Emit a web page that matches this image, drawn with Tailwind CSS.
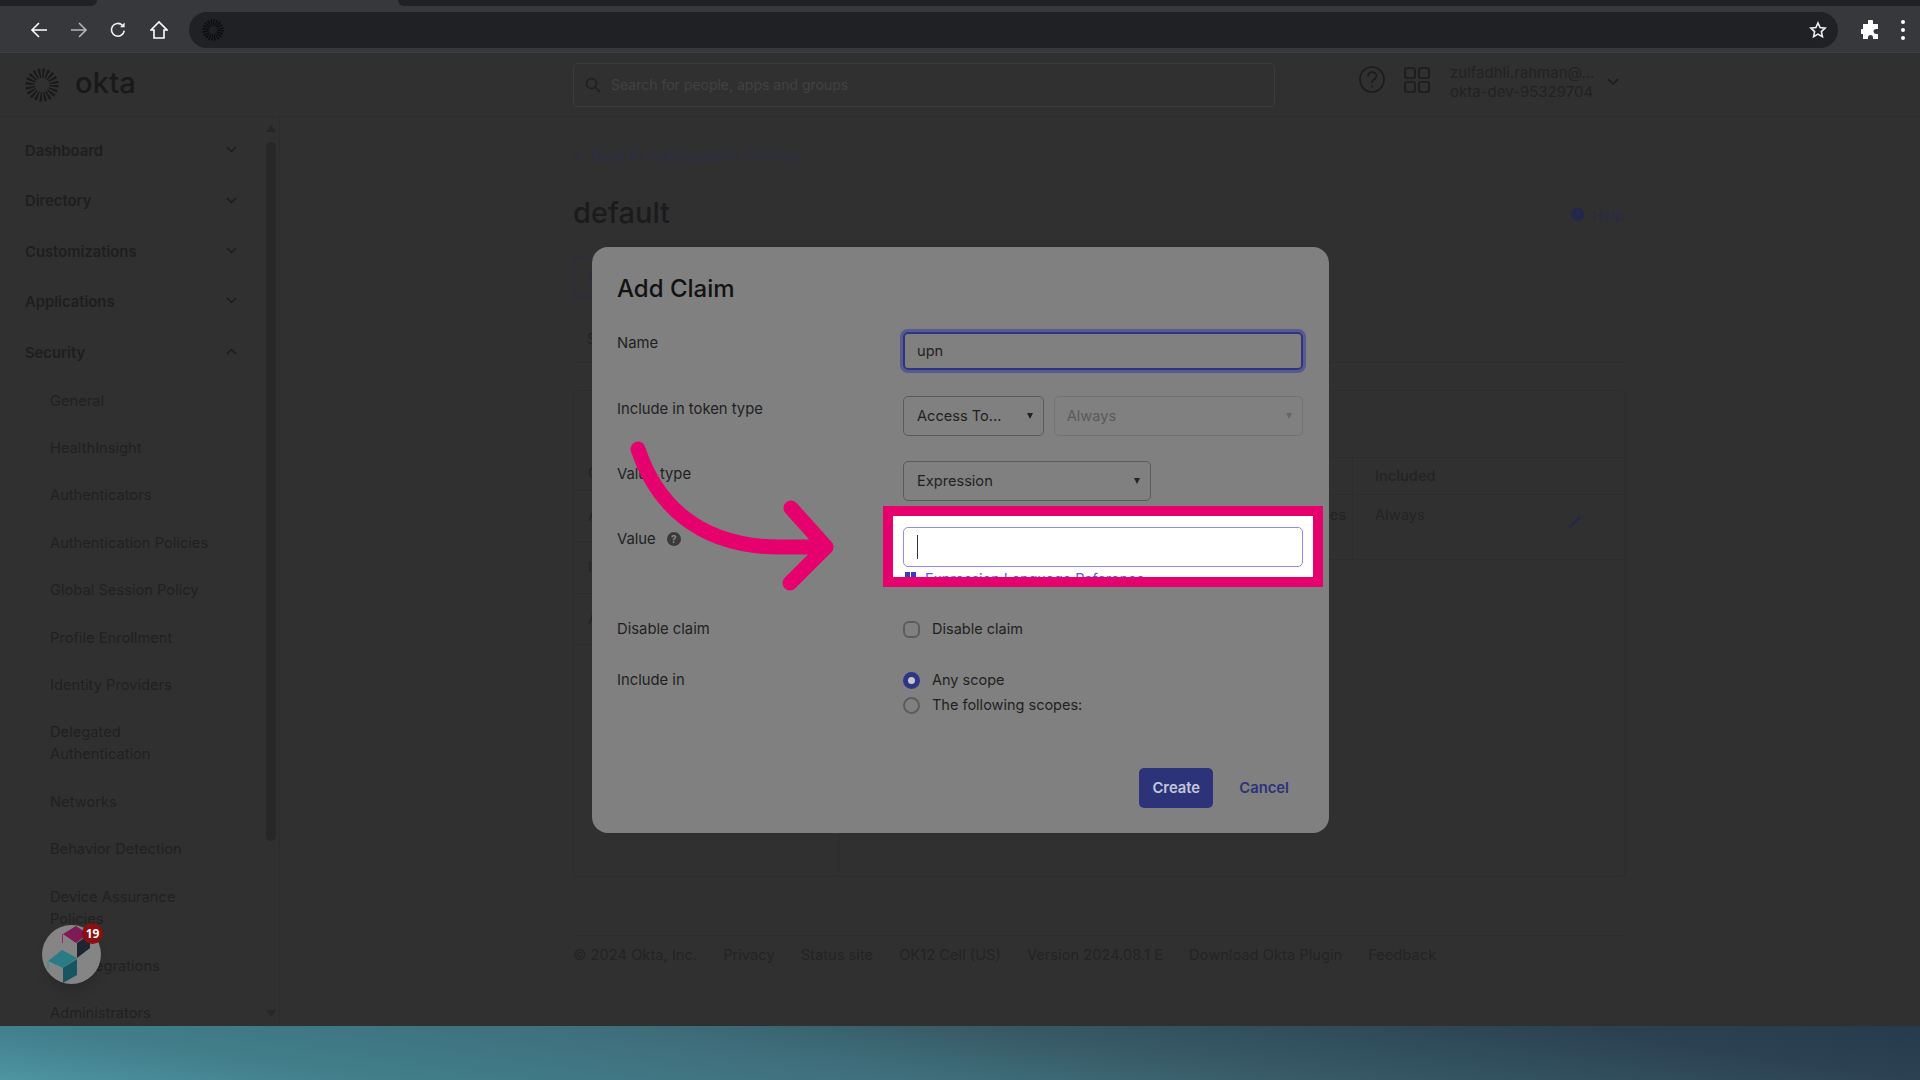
<!DOCTYPE html>
<html lang="en">
<head>
  <meta charset="UTF-8">
  <title>Add Claim</title>
  <script src="https://cdn.jsdelivr.net/npm/@tailwindcss/browser@4"></script>
</head>
<body class="w-[1920px] h-[1080px] overflow-hidden bg-[#303030] font-['Inter',sans-serif] relative">
  <!-- Browser chrome -->
  <div class="h-[53px] bg-[#36383c] border-b border-[#3d4045] flex flex-col">
    <div class="h-[6px] flex">
      <div class="w-[97px] bg-[#202124] rounded-br-lg"></div>
      <div class="w-[301px]"></div>
      <div class="flex-1 bg-[#202124] rounded-bl-lg"></div>
    </div>
    <div class="flex items-center h-[47px] pl-[30px] pt-[3px]">
      <svg class="w-[18px] h-[18px]" viewBox="0 0 18 18" fill="none" stroke="#fff" stroke-width="1.6"><path d="M17 9H2M9 2 2 9l7 7"/></svg>
      <svg class="w-[18px] h-[18px] ml-[22px]" viewBox="0 0 18 18" fill="none" stroke="#b4b6b9" stroke-width="1.6"><path d="M1 9h15M9 2l7 7-7 7"/></svg>
      <svg class="w-[18px] h-[18px] ml-[21px]" viewBox="0 0 18 18" fill="none" stroke="#f1f1f1" stroke-width="1.6"><path d="M15.2 9.6A6.4 6.4 0 1 1 13.4 4.3"/><path d="M15.6 1.6v4.6H11z" fill="#f1f1f1" stroke="none"/></svg>
      <svg class="w-[18px] h-[20px] ml-[23px]" viewBox="0 0 18 20" fill="none" stroke="#fff" stroke-width="1.6"><path d="M1 10 9 2l8 8h-3v8H4v-8z"/></svg>
      <div class="w-[1649px] h-[36px] ml-[21px] bg-[#202124] rounded-full flex items-center pl-[13px] pr-[11px] justify-between">
        <svg class="w-[22px] h-[22px]" viewBox="0 0 36 36" fill="none"><circle cx="18" cy="18" r="12" stroke="#0c0c0c" stroke-width="11" stroke-dasharray="2 1.77"/></svg>
        <svg class="w-[18px] h-[18px]" viewBox="0 0 18 18" fill="none" stroke="#f1f1f1" stroke-width="1.6"><path d="m9 2 2.1 4.600 5 .6-3.700 3.400 1 5L9 13.100l-4.400 2.500 1-5L1.900 7.200l5-.6z"/></svg>
      </div>
      <svg class="w-[20px] h-[20px] ml-[23px]" viewBox="0 0 20 20" fill="#fff"><path d="M7 1.500a2.500 2.500 0 0 1 5 0V4h5v5h-2a2.500 2.500 0 0 0 0 5h2v5h-5v-1.500a2.500 2.500 0 0 0-5 0V19H2v-5h-.5a2.500 2.500 0 0 1 0-5H2V4h5z"/></svg>
      <div class="ml-[20px] flex flex-col gap-[4px]">
        <div class="w-[4px] h-[4px] rounded-full bg-white"></div>
        <div class="w-[4px] h-[4px] rounded-full bg-white"></div>
        <div class="w-[4px] h-[4px] rounded-full bg-white"></div>
      </div>
    </div>
  </div>

  <!-- Okta header -->
  <div class="h-[64px] border-b border-[#2c2c2c] flex items-center relative">
    <div class="w-[573px] flex items-center pl-[25px]">
      <svg class="w-[34px] h-[34px]" viewBox="0 0 36 36" fill="none"><circle cx="18" cy="18" r="12.500" stroke="#191919" stroke-width="10" stroke-dasharray="2 1.930"/></svg>
      <span class="ml-[16px] text-[29px] leading-none font-medium text-[#191919] tracking-[0.2px] pb-[4px]">okta</span>
    </div>
    <div class="w-[702px] h-[44px] border border-[#3b3b3b] rounded flex items-center pl-[11px]">
      <svg class="w-[16px] h-[16px]" viewBox="0 0 16 16" fill="none" stroke="#1f1f1f" stroke-width="1.500"><circle cx="6.500" cy="6.500" r="5"/><path d="m10.500 10.500 4.500 4.500"/></svg>
      <span class="ml-[10px] text-[14px] text-[#424242]">Search for people, apps and groups</span>
    </div>
    <svg class="w-[26px] h-[27px] ml-[84px] -mt-[10px]" viewBox="0 0 26 27" fill="none" stroke="#1b1b1b" stroke-width="1.600"><ellipse cx="13" cy="13.500" rx="12" ry="12.500"/><path d="M9 10.500c0-6 8.500-5.500 8.500-.5 0 3.500-4.500 3-4.500 7"/><path d="M13 19.500v2"/></svg>
    <svg class="w-[26px] h-[26px] ml-[19px] -mt-[10px]" viewBox="0 0 26 26" fill="none" stroke="#1b1b1b" stroke-width="1.700"><rect x="1" y="1" width="10" height="10" rx="2"/><rect x="15" y="1" width="10" height="10" rx="2"/><rect x="1" y="15" width="10" height="10" rx="2"/><rect x="15" y="15" width="10" height="10" rx="2"/></svg>
    <div class="ml-[20px] text-[15px] leading-[19px] text-[#222] -mt-[5px]">
      <div>zulfadhli.rahman@...</div>
      <div>okta-dev-95329704</div>
    </div>
    <svg class="w-[12px] h-[8px] ml-[13px] -mt-[5px]" viewBox="0 0 12 8" fill="none" stroke="#1b1b1b" stroke-width="1.500"><path d="m1 1 5 5 5-5"/></svg>
  </div>

  <div class="flex h-[909px]">
    <!-- Sidebar -->
    <div class="w-[280px] shrink-0 border-r border-[#2c2c2c] relative overflow-hidden pt-[9px] pl-[25px] text-[14.800px] text-[#1e1e1e]">
      <div class="h-[50.400px] w-[212px] flex items-center justify-between font-semibold"><span>Dashboard</span><svg class="w-[11px] h-[7px] -mt-[3px]" viewBox="0 0 11 7" fill="none" stroke="#1b1b1b" stroke-width="1.400"><path d="m1 1 4.500 4.500L10 1"/></svg></div>
      <div class="h-[50.400px] w-[212px] flex items-center justify-between font-semibold"><span>Directory</span><svg class="w-[11px] h-[7px] -mt-[3px]" viewBox="0 0 11 7" fill="none" stroke="#1b1b1b" stroke-width="1.400"><path d="m1 1 4.500 4.500L10 1"/></svg></div>
      <div class="h-[50.400px] w-[212px] flex items-center justify-between font-semibold"><span>Customizations</span><svg class="w-[11px] h-[7px] -mt-[3px]" viewBox="0 0 11 7" fill="none" stroke="#1b1b1b" stroke-width="1.400"><path d="m1 1 4.500 4.500L10 1"/></svg></div>
      <div class="h-[50.400px] w-[212px] flex items-center justify-between font-semibold"><span>Applications</span><svg class="w-[11px] h-[7px] -mt-[3px]" viewBox="0 0 11 7" fill="none" stroke="#1b1b1b" stroke-width="1.400"><path d="m1 1 4.500 4.500L10 1"/></svg></div>
      <div class="h-[50.400px] w-[212px] flex items-center justify-between font-semibold"><span>Security</span><svg class="w-[11px] h-[7px] -mt-[3px]" viewBox="0 0 11 7" fill="none" stroke="#1b1b1b" stroke-width="1.400"><path d="m1 6 4.500-4.500L10 6"/></svg></div>
      <div class="-mt-[1px] pl-[25px] leading-[22px] text-[14.700px] text-[#202020]">
        <div class="h-[47.400px] flex items-center">General</div>
        <div class="h-[47.400px] flex items-center">HealthInsight</div>
        <div class="h-[47.400px] flex items-center">Authenticators</div>
        <div class="h-[47.400px] flex items-center">Authentication Policies</div>
        <div class="h-[47.400px] flex items-center">Global Session Policy</div>
        <div class="h-[47.400px] flex items-center">Profile Enrollment</div>
        <div class="h-[47.400px] flex items-center">Identity Providers</div>
        <div class="h-[69.400px] flex items-center">Delegated<br>Authentication</div>
        <div class="h-[47.400px] flex items-center">Networks</div>
        <div class="h-[47.400px] flex items-center">Behavior Detection</div>
        <div class="h-[69.400px] flex items-center">Device Assurance<br>Policies</div>
        <div class="h-[47.400px] flex items-center">API Integrations</div>
        <div class="h-[47.400px] flex items-center">Administrators</div>
      </div>
      <!-- Scrollbar -->
      <div class="absolute left-[266px] top-[8px] w-0 h-0 border-x-[5px] border-x-transparent border-b-[7px] border-b-[#272727]"></div>
      <div class="absolute left-[266px] top-[25px] w-[10px] h-[699px] rounded-full bg-[#272727]"></div>
      <div class="absolute left-[266px] top-[893px] w-0 h-0 border-x-[5px] border-x-transparent border-t-[7px] border-t-[#272727]"></div>
    </div>

    <!-- Main content -->
    <div class="pl-[293px] w-[1346px] shrink-0 text-[14.700px] text-[#232323]">
      <div class="h-[50px] flex items-end">
        <div class="flex items-center h-[22px] text-[#2c2c46]">
          <svg class="w-[12px] h-[12px] mr-[6px]" viewBox="0 0 12 12" fill="none" stroke="#2c2c46" stroke-width="1.300"><path d="M11 6H1.500M6 1.500 1.500 6 6 10.500"/></svg>
          <span>Back to Authorization Servers</span>
        </div>
      </div>
      <div class="h-[40px] mt-[26px] flex items-center justify-between">
        <span class="text-[29px] font-medium text-[#1b1b1b]">default</span>
        <span class="flex items-center text-[#2a2a42] mr-[2px] mt-[6px]"><span class="w-[13px] h-[13px] rounded-full bg-[#23264e] text-[9px] leading-[13px] text-center text-[#303030] font-bold -mt-[3px]">?</span><span class="ml-[8px]">Help</span></span>
      </div>
      <div class="w-[60px] h-[40px] mt-[24px] border border-[#2a2b46] rounded flex items-center pl-[14px] text-[#2a2b46]">A</div>
      <div class="h-[66px] border-b border-[#2c2c2c] flex items-center pl-[14px] pt-[20px]">S</div>
      <!-- Claims panel -->
      <div class="w-[1053px] h-[487px] mt-[27px] border border-[#2c2c2c] rounded flex">
        <div class="w-[265px] border-r border-[#2c2c2c] pt-[66px]">
          <div class="h-[33px] flex items-center pl-[14px]">C</div>
          <div class="h-[51px] border-t border-[#2c2c2c] flex items-center pl-[14px]">A</div>
          <div class="h-[52px] border-t border-[#2c2c2c] flex items-center pl-[14px]">ID</div>
          <div class="h-[52px] border-y border-[#2c2c2c] flex items-center pl-[14px]">A</div>
        </div>
        <div class="flex-1 pt-[66px]">
          <div class="h-[38px] border-y border-[#2c2c2c] flex items-center font-medium">
            <div class="w-[492px] text-right pr-[1px]">e</div>
            <div class="w-[22px] self-stretch border-r border-[#2c2c2c]"></div>
            <div class="pl-[22px]">Included</div>
          </div>
          <div class="h-[65px] border-b border-[#2c2c2c] flex">
            <div class="w-[507px] text-right pt-[9px]">es</div>
            <div class="w-[7px] self-stretch border-r border-[#2c2c2c]"></div>
            <div class="pl-[22px] pt-[9px] w-[216px]">Always</div>
            <svg class="w-[12px] h-[12px] mt-[21px]" viewBox="0 0 12 12" fill="none" stroke="#23264e" stroke-width="2"><path d="M1 11 11 1"/></svg>
          </div>
        </div>
      </div>
      <!-- Footer -->
      <div class="w-[1053px] h-[39px] mt-[58px] border-t border-[#2c2c2c] flex items-center gap-[26px] text-[#232323]">
        <span>© 2024 Okta, Inc.</span><span>Privacy</span><span>Status site</span><span>OK12 Cell (US)</span><span>Version 2024.08.1 E</span><span>Download Okta Plugin</span><span>Feedback</span>
      </div>
    </div>
  </div>

  <!-- Bottom gradient strip -->
  <div class="absolute left-0 top-[1026px] w-[1920px] h-[54px] bg-[linear-gradient(8.400deg,#4e94a2_0%,#417f8b_16%,#3f6e7b_42%,#375a66_58%,#2c4253_84%,#263c4e_100%)]"></div>

  <!-- Floating widget -->
  <div class="absolute left-[42px] top-[925px] w-[59px] h-[59px] rounded-full bg-[#858585] shadow-lg"></div>
  <svg class="absolute left-0 top-[920px] w-[110px] h-[70px]" viewBox="0 920 110 70">
    <path d="M63 934l13-8 12 8-12 9z" fill="#7f1a55"/>
    <path d="M62.500 934v9" stroke="#a0226a" fill="none"/>
    <path d="M77 943l13-9v14l-13 10z" fill="#1c2530"/>
    <path d="M48 961l14-11 15 8-14 10z" fill="#2a7c84"/>
    <path d="M63 968l14-9v16l-14 8z" fill="#185560"/>
    <path d="M48 961v8" stroke="#2f8f98" fill="none"/>
  </svg>
  <div class="absolute left-[82px] top-[923px] w-[21px] h-[21px] rounded-full bg-[#8a1010] text-white text-[12px] leading-[21px] text-center font-bold font-['Open_Sans',sans-serif]">19</div>

  <!-- Modal -->
  <div class="absolute left-[592px] top-[247px] w-[737px] h-[586px] bg-[#808080] rounded-2xl px-[25px] pt-[26px] text-[14.600px] leading-[20px] text-[#1f1f1f]">
    <div class="h-[32px] flex items-center text-[24px] font-medium text-[#121212]">Add Claim</div>
    <div class="grid grid-cols-[286px_400px] mt-[27px]">
      <div class="pt-px text-[14.800px]">Name</div>
      <div class="h-[38px] border-2 border-[#30347e] rounded-[5px] ring-[3px] ring-[#555a90] flex items-center pl-[12px]">upn</div>
    </div>
    <div class="grid grid-cols-[286px_400px] mt-[26px]">
      <div class="pt-[3px] text-[14.800px]">Include in token type</div>
      <div class="flex gap-[10px]">
        <div class="w-[141px] h-[40px] border border-[#5a5a5a] rounded-[5px] flex items-center justify-between pl-[13px] pr-[10px]"><span>Access To...</span><span class="w-0 h-0 border-x-[3.500px] border-x-transparent border-t-[6px] border-t-[#222]"></span></div>
        <div class="w-[250px] h-[40px] border border-[#737373] rounded-[5px] flex items-center justify-between pl-[12px] pr-[10px] text-[#5a5a5a]"><span>Always</span><span class="w-0 h-0 border-x-[3.500px] border-x-transparent border-t-[6px] border-t-[#666]"></span></div>
      </div>
    </div>
    <div class="grid grid-cols-[286px_400px] mt-[25px]">
      <div class="pt-[3px] text-[14.800px]">Value type</div>
      <div class="w-[248px] h-[40px] border border-[#5a5a5a] rounded-[5px] flex items-center justify-between pl-[13px] pr-[10px]"><span>Expression</span><span class="w-0 h-0 border-x-[3.500px] border-x-transparent border-t-[6px] border-t-[#222]"></span></div>
    </div>
    <div class="grid grid-cols-[286px_400px] mt-[25px]">
      <div class="pt-[3px] flex items-start text-[14.800px]">Value <span class="ml-[11px] mt-[3px] w-[14px] h-[14px] rounded-full bg-[#3a3a3a] text-[10px] leading-[14px] text-center text-[#888] font-bold">?</span></div>
      <div>
        <div class="h-[40px]"></div>
        <div class="mt-[2px] pl-[22px] text-[14.400px] text-[#555]">Expression Language Reference</div>
      </div>
    </div>
    <div class="grid grid-cols-[286px_400px] mt-[31px]">
      <div class="text-[14.800px]">Disable claim</div>
      <div class="flex items-center gap-[12px]"><span class="w-[17px] h-[17px] rounded-[6px] border-2 border-[#5c5c5c]"></span><span class="text-[14.500px]">Disable claim</span></div>
    </div>
    <div class="grid grid-cols-[286px_400px] mt-[31px]">
      <div class="text-[14.800px]">Include in</div>
      <div class="flex flex-col gap-[5px] text-[14.500px]">
        <div class="flex items-center gap-[12px]"><span class="w-[17px] h-[17px] rounded-full border-[5px] border-[#2f3585] bg-[#c8c8c8]"></span>Any scope</div>
        <div class="flex items-center gap-[12px]"><span class="w-[17px] h-[17px] rounded-full border-2 border-[#5c5c5c]"></span>The following scopes:</div>
      </div>
    </div>
    <div class="flex justify-end items-center mt-[53px] pr-[15px]">
      <div class="w-[74px] h-[40px] rounded-[5px] bg-[#2d3378] text-[#c4c6da] font-semibold flex items-center justify-center text-[14.800px]">Create</div>
      <div class="ml-[26px] text-[#2d3378] font-semibold text-[14.800px]">Cancel</div>
    </div>

    <!-- Highlight annotation -->
    <div class="absolute left-[291px] top-[259px] w-[440px] h-[81px] border-[10px] border-[#e6006e] bg-white overflow-hidden pl-[10px] pt-[11px]">
      <div class="w-[400px] h-[40px] border-[1.500px] border-[#8f8ff0] rounded-[5px] flex items-center pl-[13px]"><span class="w-px h-[24px] bg-[#333]"></span></div>
      <div class="relative h-[20px] mt-[2px] pl-[22px] text-[14.400px] text-[#5c5ce0] whitespace-nowrap"><span class="absolute left-[2px] top-[3px] w-[5px] h-[12px] bg-[#3c3cc0]"></span><span class="absolute left-[8px] top-[3px] w-[5px] h-[12px] bg-[#3c3cc0]"></span>Expression Language Reference</div>
    </div>
  </div>

  <!-- Arrow -->
  <svg class="absolute left-[620px] top-[430px] w-[230px] h-[175px]" viewBox="620 430 230 175" fill="none" stroke="#e6006e" stroke-width="15" stroke-linecap="round" stroke-linejoin="round">
    <path d="M638 449C655 500 695 547 780 547H826"/>
    <path d="M791 508 826 547 790 583"/>
  </svg>
</body>
</html>
